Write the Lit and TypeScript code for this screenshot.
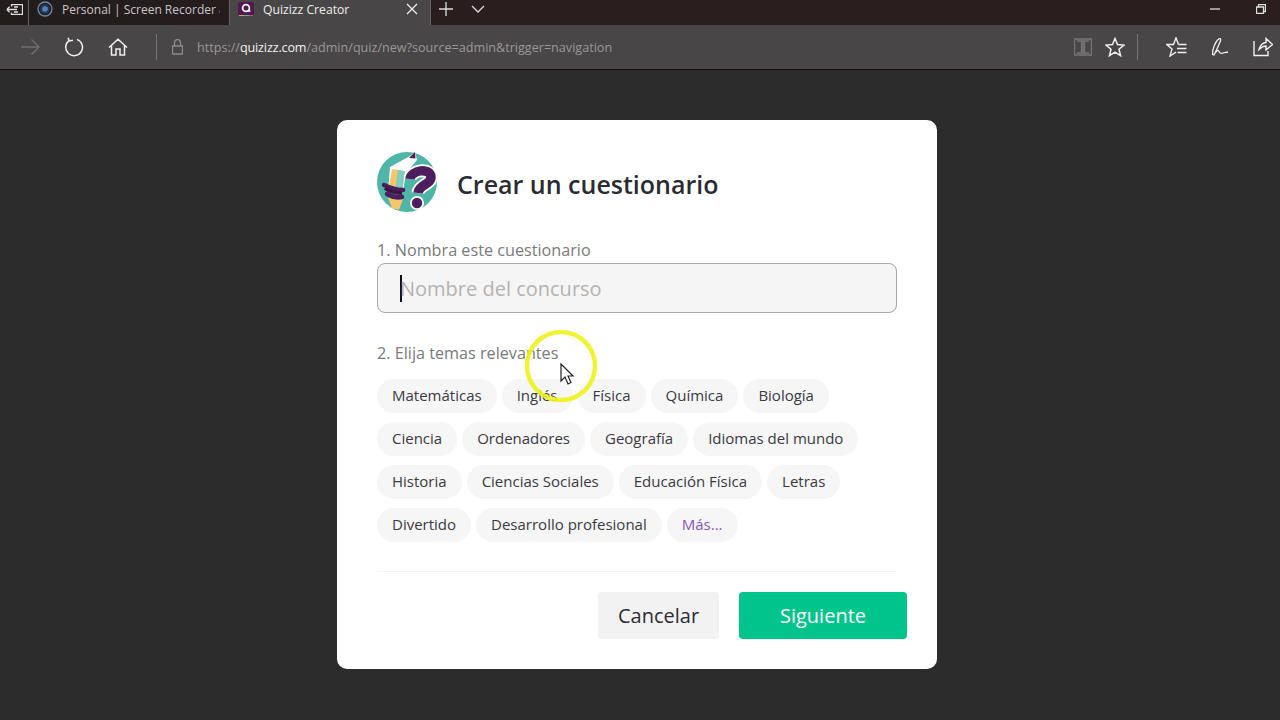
import { LitElement, html, css, svg } from "lit";
import { customElement } from "lit/decorators.js";

const rows = [
  ["Matemáticas", "Inglés", "Física", "Química", "Biología"],
  ["Ciencia", "Ordenadores", "Geografía", "Idiomas del mundo"],
  ["Historia", "Ciencias Sociales", "Educación Física", "Letras"],
  ["Divertido", "Desarrollo profesional"],
];

const ic = (w: number, h: number, body: unknown, cls = "") =>
  html`<svg class="ic ${cls}" width=${w} height=${h} viewBox="0 0 ${w} ${h}" fill="none" stroke="currentColor" stroke-width="1.3">${body}</svg>`;

@customElement("app-root")
export class AppRoot extends LitElement {
  static styles = css`
    :host { display: block; width: 1280px; height: 720px; overflow: hidden; background: #2c2c2c; font-family: "Open Sans", sans-serif; position: relative; }
    .ic { display: block; flex: none; }
    .tabs { height: 25px; background: linear-gradient(90deg, #221c1c, #2a1e1e 40%, #2a1e1e); display: flex; color: #ddd; font-size: 12.2px; }
    .back { width: 28px; display: flex; justify-content: center; align-items: center; padding-bottom: 7px; box-sizing: border-box; }
    .tab { height: 25px; display: flex; align-items: center; box-sizing: border-box; border-left: 1px solid #6a6464; padding-bottom: 7px; }
    .tab.a { width: 201px; color: #c8c6c6; padding-left: 8px; gap: 9px; white-space: nowrap; font-size: 12px; }
    .tab.a span { width: 158px; overflow: hidden; }
    .tab.b { width: 202px; background: #484646; color: #eee; padding-left: 8px; gap: 9px; border-right: 1px solid #6a6464; }
    .tab.b span { flex: 1; }
    .x { margin-right: 12px; }
    .newt { display: flex; align-items: center; gap: 18px; margin-left: 8px; flex: 1; padding-bottom: 7px; }
    .win { display: flex; align-items: center; gap: 36px; margin-right: 14px; padding-bottom: 7px; }
    .bar { height: 44px; background: #484646; border-bottom: 1px solid #0c0c0c; display: flex; align-items: center; color: #f0f0f0; }
    .nav { display: flex; align-items: center; padding-left: 20px; }
    .fwd { color: #716f6f; }
    .sp24 { width: 24px; }
    .sp28 { width: 28px; }
    .sp14 { width: 13px; }
    .sp12 { width: 12px; }
    .sp23 { width: 23px; }
    .sep { width: 1px; height: 26px; background: #767474; flex: none; }
    .url { margin-left: 14px; font-size: 12.6px; color: #9a9898; white-space: nowrap; flex: 1; }
    .url b { font-weight: 400; color: #f2f2f2; letter-spacing: -0.15px; }
    .lock { margin-left: 15px; color: #8d8b8b; }
    .tools { display: flex; align-items: center; margin-right: 7px; }
    .dim { color: #777; }
    main { display: flex; justify-content: center; padding: 50px 6px 0 0; }
    .modal { width: 600px; height: 549px; box-sizing: border-box; background: #fff; border-radius: 10px; padding: 32px 40px 0; color: #2c2c33; display: flex; flex-direction: column; }
    .head { display: flex; align-items: center; gap: 20px; height: 60px; }
    h1 { margin: 0; font-size: 25px; font-weight: 600; color: #2b2b33; line-height: 1; position: relative; top: 2px; }
    .lab { font-size: 16.2px; color: #7a7a7a; line-height: 20px; }
    .l1 { margin-top: 28px; }
    .input { margin-top: 3px; width: 520px; height: 50px; box-sizing: border-box; border: 1px solid #a9a9a9; border-radius: 8px; background: #f5f5f5; display: flex; align-items: center; padding-left: 22px; font-size: 20px; color: #b5b2b2; }
    .caret { width: 1.5px; height: 27px; background: #111; margin-right: -1.5px; }
    .l2 { margin-top: 30px; }
    .chips { margin-top: 16px; display: flex; flex-direction: column; gap: 9px; }
    .row { display: flex; gap: 5px; }
    .chip { height: 34px; box-sizing: border-box; padding: 0 15px; border-radius: 17px; background: #f6f6f6; font-size: 15px; line-height: 32px; color: #3a3a42; white-space: nowrap; }
    .more { color: #8854c0; }
    hr { margin: 29px 0 0; width: 520px; height: 1px; border: 0; background: #f2f2f2; }
    .foot { margin-top: 20px; display: flex; justify-content: flex-end; gap: 20px; margin-right: -10px; }
    .btn { height: 47px; border-radius: 4px; font-size: 20px; display: flex; align-items: center; justify-content: center; }
    .cancel { width: 121px; background: #f2f2f2; color: #2c2c33; }
    .next { width: 168px; background: #00c58a; color: #fff; }
    .cursor { position: absolute; left: 524px; top: 329px; pointer-events: none; }
    .ring { filter: blur(0.5px); }
  `;

  render() {
    return html`
      <div class="tabs">
        <div class="back">${ic(17, 11, svg`<path d="M5.5 2.5V.5H16.5V10.5H5.5V8.5M.8 5.5H11M.8 5.5L3.6 2.8M.8 5.5L3.6 8.2M8 3H12M8 8H12"/>`)}</div>
        <div class="tab a">
          ${ic(16, 16, svg`<circle cx="8" cy="8" r="7" stroke="#6d8aa3"/><circle cx="8" cy="8" r="5" fill="#23384f" stroke="none"/><circle cx="8" cy="8" r="2.8" fill="#4f84bd" stroke="none"/>`)}
          <span>Personal | Screen Recorder &amp;</span>
        </div>
        <div class="tab b">
          <svg class="ic" width="16" height="14" viewBox="0 0 16 14">
            <rect width="16" height="13" rx="1.5" fill="#4c1a4e"/>
            <circle cx="8" cy="6" r="3.4" fill="none" stroke="#f4ecf4" stroke-width="1.8"/>
            <path d="M9 9H12.5" stroke="#f4ecf4" stroke-width="1.6"/>
            <path d="M1 13.5H6" stroke="#e0a040"/><path d="M6 13.5H11" stroke="#4fb5a9"/><path d="M11 13.5H15" stroke="#c05080"/>
          </svg>
          <span>Quizizz Creator</span>
          <div class="x">${ic(12, 12, svg`<path d="M1 1L11 11M11 1L1 11"/>`)}</div>
        </div>
        <div class="newt">
          ${ic(14, 14, svg`<path d="M7 0V14M0 7H14"/>`)}
          ${ic(14, 14, svg`<path d="M1 4L7 10L13 4"/>`)}
        </div>
        <div class="win">
          ${ic(10, 10, svg`<path d="M0 5H10"/>`)}
          ${ic(10, 10, svg`<path d="M.5 3H7.5V9.5H.5ZM2.5 3V.5H9.5V7.5H7.5"/>`)}
        </div>
      </div>
      <div class="bar">
        <div class="nav">
          ${ic(20, 18, svg`<path d="M1 9H19M11.5 1.5L19 9L11.5 16.5"/>`, "fwd")}
          <div class="sp24"></div>
          ${ic(20, 20, svg`<path d="M5 3.6A8.4 8.4 0 1 0 13 2.4M4 .8L5.4 3.9L9 3.2" stroke-width="1.5"/>`)}
          <div class="sp24"></div>
          ${ic(20, 18, svg`<path d="M1 9.5L10 1.2L19 9.5M3.5 7.5V17H8V11H12V17H16.5V7.5" stroke-width="1.5"/>`)}
          <div class="sp28"></div>
          <div class="sep"></div>
        </div>
        <div class="lock">${ic(11, 16, svg`<path d="M.5 7H10.5V15H.5ZM2.5 7V3.5A3 3 0 0 1 8.5 3.5V7"/>`)}</div>
        <div class="url">https://<b>quizizz.com</b>/admin/quiz/new?source=admin&amp;trigger=navigation</div>
        <div class="tools">
          <span class="dim">${ic(18, 18, svg`<path d="M.5 1H17.5V17H.5ZM9 1V17M3 3H7.5V15H3M15 3H10.5V15H15"/>`)}</span>
          <div class="sp14"></div>
          ${ic(20, 20, svg`<path d="M10 1.5L12.5 7.6L19 8.1L14 12.3L15.6 18.7L10 15.2L4.4 18.7L6 12.3L1 8.1L7.5 7.6Z" stroke-width="1.5"/>`)}
          <div class="sp12"></div>
          <div class="sep"></div>
          <div class="sp28"></div>
          ${ic(22, 20, svg`<path d="M12.5 7.5L10 .8L7.5 7.5H.8L6 12L4 19L10 15.2M12.5 7.5H20.5M11 11.5H20.5M11.5 15.5H20.5" stroke-width="1.4"/>`)}
          <div class="sp23"></div>
          ${ic(18, 20, svg`<path d="M1.5 17.5C1 12 5 3.5 8 1.8C10 .8 10 3 9 5C7 10 5 14 3 18ZM4 16C6 13.5 7 12.5 8 14.5C9 16.5 10 17 12 16C14 15 15 15.5 17 15" stroke-width="1.3"/>`)}
          <div class="sp24"></div>
          ${ic(20, 20, svg`<path d="M1 4V18.5H15V14M6 12.5C7 8.5 10 5.5 13 5.5V1.5L19.5 7.5L13 13V9C10 9 8 10.5 6 12.5Z" stroke-width="1.4"/>`)}
        </div>
      </div>
      <main>
        <div class="modal">
          <div class="head">
            <svg class="ic" width="60" height="60" viewBox="0 0 60 60">
              <circle cx="30" cy="30" r="30" fill="#4fb5a9"/>
              <path d="M13 15L33 4L38 0L40 8L29 21L26 40L11 40Z" fill="#fff"/>
              <path d="M15 17L28 19L25 42L11 40Z" fill="#f5c66b"/>
              <path d="M21 18L28 19L25 40L18 39Z" fill="#7fcdc3"/>
              <path d="M15 16L33 6L37.5 6L28 19Z" fill="#fff"/>
              <path d="M32 6L38 0L38.5 6.5Z" fill="#4d1d5d"/>
              <path d="M11 46L26 47L22 58L15 56Z" fill="#f5c66b"/>
              <path d="M7 33C13 36 20 38 26 38M10 42C15 45 20 46 25 45" fill="none" stroke="#4d1d5d" stroke-width="4.5" stroke-linecap="round"/>
              <path d="M8 36C13 40 20 41 25 41" fill="none" stroke="#3d1549" stroke-width="4"/>
              <path d="M33 27C34 18 53 15 54 25C54 33 42 32 41 41" fill="none" stroke="#fff" stroke-width="13"/>
              <circle cx="40" cy="51" r="7" fill="#fff"/>
              <path d="M33 27C34 18 53 15 54 25C54 33 42 32 41 41" fill="none" stroke="#4d1d5d" stroke-width="9.5"/>
              <circle cx="40" cy="51" r="5.2" fill="#4d1d5d"/>
            </svg>
            <h1>Crear un cuestionario</h1>
          </div>
          <div class="lab l1">1. Nombra este cuestionario</div>
          <div class="input"><span class="caret"></span><span>Nombre del concurso</span></div>
          <div class="lab l2">2. Elija temas relevantes</div>
          <div class="chips">
            ${rows.map((r, i) => html`<div class="row">
              ${r.map((c) => html`<div class="chip">${c}</div>`)}
              ${i === 3 ? html`<div class="chip more">Más...</div>` : ""}
            </div>`)}
          </div>
          <hr />
          <div class="foot">
            <div class="btn cancel">Cancelar</div>
            <div class="btn next">Siguiente</div>
          </div>
        </div>
      </main>
      <svg class="cursor" width="74" height="74" viewBox="0 0 74 74" fill="none">
        <circle class="ring" cx="37" cy="37" r="34" stroke="#eef21e" stroke-width="4.5" opacity=".9"/>
        <path d="M37 35V52L41 48L44 55L47 53.5L44 47H49Z" fill="#fff" stroke="#222" stroke-width="1.2"/>
      </svg>
    `;
  }
}
